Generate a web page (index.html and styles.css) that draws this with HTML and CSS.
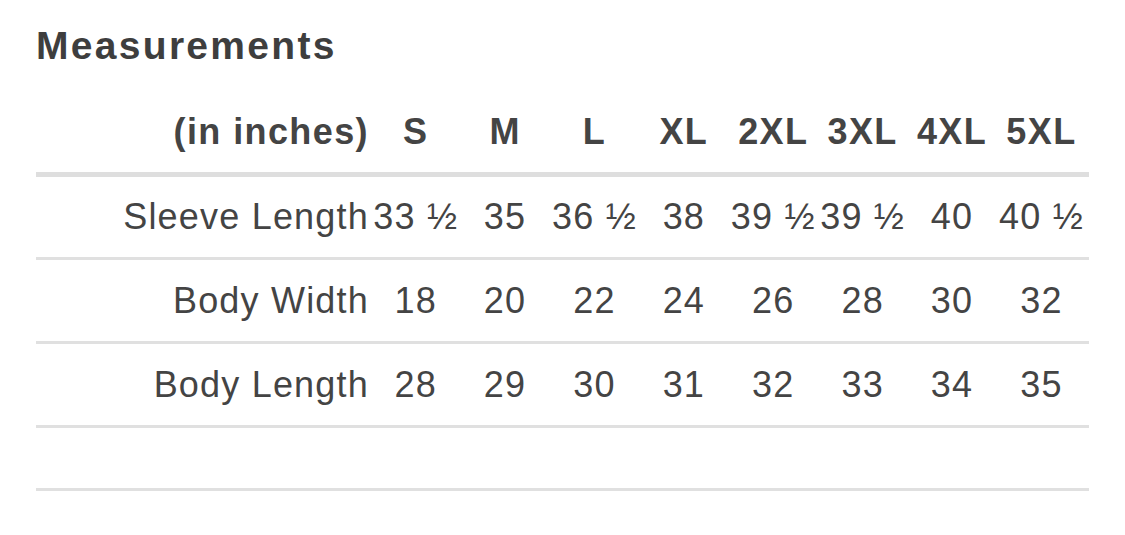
FILE: index.html
```html
<!DOCTYPE html>
<html lang="en">
<head>
<meta charset="utf-8">
<title>Measurements</title>
<link rel="stylesheet" href="styles.css">
</head>
<body>
<main class="page">
  <h2 class="title">Measurements</h2>
  <div class="chart">
    <div class="row head">
      <div class="label">(in inches)</div>
      <div class="cell">S</div><div class="cell">M</div><div class="cell">L</div><div class="cell">XL</div>
      <div class="cell">2XL</div><div class="cell">3XL</div><div class="cell">4XL</div><div class="cell">5XL</div>
    </div>
    <div class="row first">
      <div class="label">Sleeve Length</div>
      <div class="cell">33 ½</div><div class="cell">35</div><div class="cell">36 ½</div><div class="cell">38</div>
      <div class="cell">39 ½</div><div class="cell">39 ½</div><div class="cell">40</div><div class="cell">40 ½</div>
    </div>
    <div class="row">
      <div class="label">Body Width</div>
      <div class="cell">18</div><div class="cell">20</div><div class="cell">22</div><div class="cell">24</div>
      <div class="cell">26</div><div class="cell">28</div><div class="cell">30</div><div class="cell">32</div>
    </div>
    <div class="row">
      <div class="label">Body Length</div>
      <div class="cell">28</div><div class="cell">29</div><div class="cell">30</div><div class="cell">31</div>
      <div class="cell">32</div><div class="cell">33</div><div class="cell">34</div><div class="cell">35</div>
    </div>
    <div class="row empty"></div>
  </div>
</main>
</body>
</html>
```
FILE: styles.css
```css
html, body {
  margin: 0;
  padding: 0;
  background: #ffffff;
}

body {
  font-family: "Liberation Sans", Arial, Helvetica, sans-serif;
  color: #444444;
}

.page {
  padding: 26px 36px 0 36px;
  width: 1053px;
}

.title {
  margin: 0;
  font-size: 39px;
  line-height: 39px;
  font-weight: 700;
  letter-spacing: 2.3px;
  color: #3e3e3e;
}

.chart {
  margin-top: 26px;
  width: 1053px;
}

.row {
  display: grid;
  grid-template-columns: 335px repeat(8, 89.4px);
  align-items: center;
  height: 81px;
  border-bottom: 3px solid #e0e0e0;
  font-size: 36px;
  letter-spacing: 1.2px;
  white-space: nowrap;
}

.row.head {
  font-weight: 700;
  letter-spacing: 1.4px;
  border-bottom: 5px solid #dedede;
}

.row.first {
  height: 80px;
}

.row.empty {
  height: 60px;
}

.label {
  text-align: right;
  padding-right: 2px;
}

.cell {
  text-align: center;
}
```
